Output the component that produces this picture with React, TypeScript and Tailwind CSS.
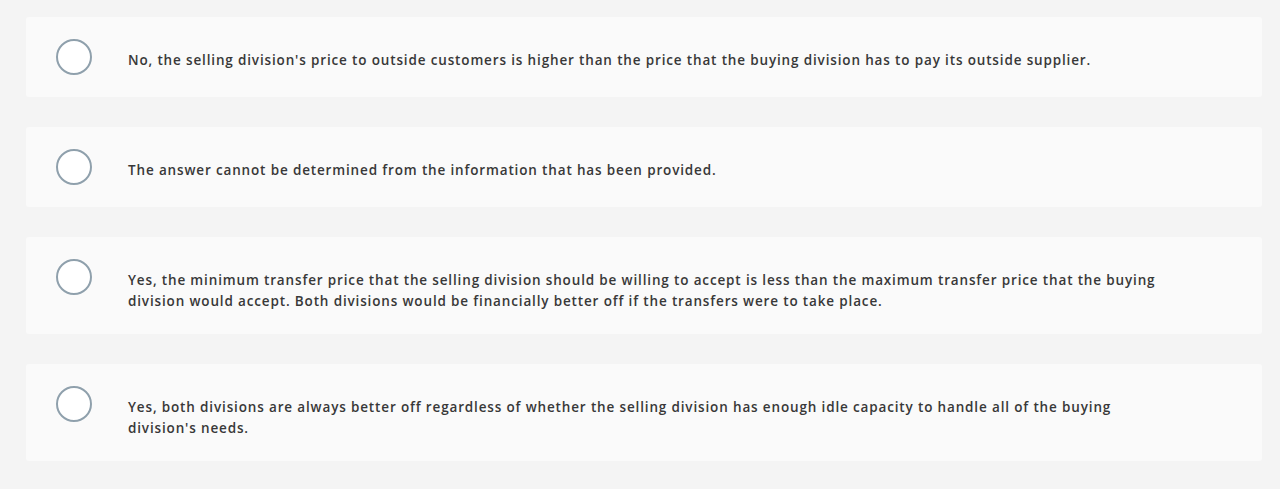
import React from 'react';

const options = [
  "No, the selling division's price to outside customers is higher than the price that the buying division has to pay its outside supplier.",
  'The answer cannot be determined from the information that has been provided.',
  'Yes, the minimum transfer price that the selling division should be willing to accept is less than the maximum transfer price that the buying division would accept. Both divisions would be financially better off if the transfers were to take place.',
  "Yes, both divisions are always better off regardless of whether the selling division has enough idle capacity to handle all of the buying division's needs.",
];

export default function App() {
  return (
    <main className="min-h-screen w-full bg-[#f4f4f4] pl-[26px] pr-[18px] pt-[17px] font-['Open_Sans',sans-serif]">
      <div className="flex flex-col gap-[30px]">
        {options.map((text, i) => (
          <label
            key={i}
            className="flex items-start rounded-[3px] bg-[#fafafa] pl-[30px] pr-[96px] pt-[22px] pb-[22px] cursor-pointer"
          >
            <span className="h-[36px] w-[36px] shrink-0 rounded-full border-2 border-[#8fa0ac] bg-white" />
            <span className="ml-[36px] mt-[11px] text-[13.5px] leading-[21px] font-semibold tracking-[0.85px] text-[#383838]">
              {text}
            </span>
          </label>
        ))}
      </div>
    </main>
  );
}
